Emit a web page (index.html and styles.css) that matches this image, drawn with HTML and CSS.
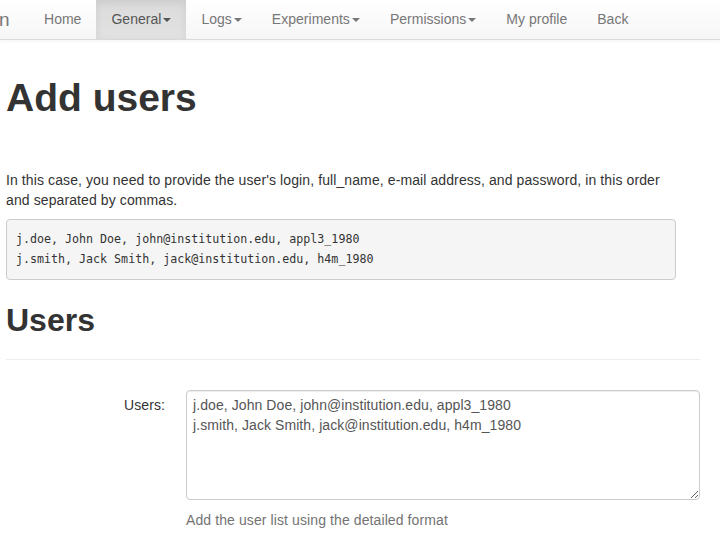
FILE: index.html
```html
<!DOCTYPE html>
<html>
<head>
<meta charset="utf-8">
<title>Add users</title>
<link rel="stylesheet" href="styles.css">
</head>
<body>
<nav class="navbar">
  <span class="brand">n</span>
  <ul class="nav">
    <li><a href="#">Home</a></li>
    <li class="active"><a href="#">General<span class="caret"></span></a></li>
    <li><a href="#">Logs<span class="caret"></span></a></li>
    <li><a href="#">Experiments<span class="caret"></span></a></li>
    <li><a href="#">Permissions<span class="caret"></span></a></li>
    <li><a href="#">My profile</a></li>
    <li><a href="#">Back</a></li>
  </ul>
</nav>
<main class="content">
  <h1 class="title">Add users</h1>
  <p class="intro">In this case, you need to provide the user's login, full_name, e-mail address, and password, in this order and separated by commas.</p>
  <pre class="example">j.doe, John Doe, john@institution.edu, appl3_1980
j.smith, Jack Smith, jack@institution.edu, h4m_1980</pre>
  <h2 class="section">Users</h2>
  <hr class="rule">
  <form class="form-row">
    <label class="label" for="users">Users:</label>
    <div class="field">
      <textarea id="users" class="textarea">j.doe, John Doe, john@institution.edu, appl3_1980
j.smith, Jack Smith, jack@institution.edu, h4m_1980</textarea>
      <div class="help">Add the user list using the detailed format</div>
    </div>
  </form>
</main>
</body>
</html>
```
FILE: styles.css
```css
html, body {
  margin: 0;
  padding: 0;
  background: #fff;
}
body {
  font-family: "Liberation Sans", Arial, sans-serif;
  font-size: 14px;
  line-height: 20px;
  letter-spacing: 0.1px;
  color: #333;
}
.navbar {
  display: flex;
  align-items: stretch;
  height: 39px;
  background: linear-gradient(to bottom, #ffffff 0, #f6f6f6 100%);
  border-bottom: 1px solid #d9d9d9;
  box-shadow: 0 1px 4px rgba(0,0,0,0.06);
}
.brand {
  font-size: 19px;
  color: #777;
  line-height: 39px;
  width: 30px;
  margin-left: -1px;
  letter-spacing: 0;
}
.nav {
  display: flex;
  list-style: none;
  margin: 0;
  padding: 0;
  letter-spacing: 0.02px;
}
.nav li a {
  display: block;
  padding: 0 15px;
  line-height: 38px;
  color: #777;
  text-decoration: none;
}
.nav li.active a {
  color: #555;
  background: linear-gradient(to bottom, #dbdbdb 0, #e2e2e2 100%);
  box-shadow: inset 0 3px 9px rgba(0,0,0,0.075);
  height: 39px;
}
.caret {
  display: inline-block;
  width: 0;
  height: 0;
  margin-left: 2px;
  vertical-align: middle;
  border-top: 4px solid;
  border-left: 4px solid transparent;
  border-right: 4px solid transparent;
}
.content {
  padding: 0 20px 0 6px;
}
.title {
  font-size: 39px;
  line-height: 1.1;
  font-weight: bold;
  letter-spacing: 0;
  margin: 37px 0 50px;
  color: #333;
}
.intro {
  margin: 0 0 9px;
  padding-right: 30px;
}
.example {
  width: 650px;
  margin: 0;
  padding: 9.5px 9px;
  font-family: "DejaVu Sans Mono", "Liberation Mono", monospace;
  font-size: 11.65px;
  line-height: 20px;
  letter-spacing: 0;
  color: #333;
  background: #f5f5f5;
  border: 1px solid #ccc;
  border-radius: 4px;
}
.section {
  font-size: 32px;
  line-height: 1.1;
  font-weight: bold;
  letter-spacing: 0;
  margin: 23px 0 0;
  color: #333;
}
.rule {
  border: 0;
  border-top: 1px solid #eee;
  margin: 21px 0 30px;
}
.form-row {
  display: flex;
  gap: 21px;
}
.label {
  width: 159px;
  text-align: right;
  padding-top: 5px;
  color: #333;
}
.field {
  flex: 1;
}
.textarea {
  display: block;
  box-sizing: border-box;
  width: 100%;
  height: 110px;
  margin: 0;
  padding: 4px 6px;
  font-family: "Liberation Sans", Arial, sans-serif;
  font-size: 14px;
  line-height: 20px;
  letter-spacing: 0.08px;
  color: #555;
  border: 1px solid #ccc;
  border-radius: 4px;
  box-shadow: inset 0 1px 1px rgba(0,0,0,0.075);
  resize: vertical;
}
.help {
  margin-top: 10px;
  color: #737373;
}
```
